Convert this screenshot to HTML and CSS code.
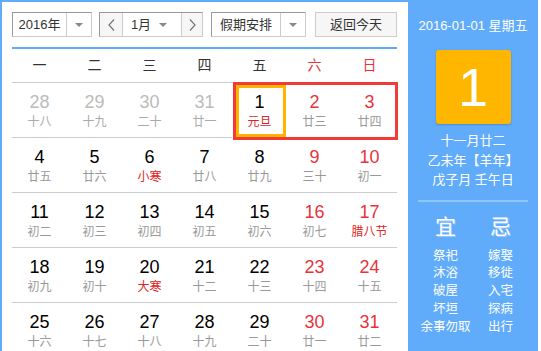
FILE: index.html
```html
<!DOCTYPE html>
<html>
<head>
<title>万年历</title>
<link rel="stylesheet" href="styles.css">
</head>
<body>

<div class='calendar'>

    <div class='main'>
        <div class='toolbar'>
            <div class='select year'>
                <div class='label'>2016年</div>
                <div class='arrow'><span class='tri'></span></div>
            </div>
            <div class='select month'>
                <div class='step prev'>
                    <svg width='7' height='12' viewBox='0 0 7 12'><polyline points='6,0.5 1,6 6,11.5' fill='none' stroke='#777' stroke-width='1.2'/></svg>
                </div>
                <div class='label'>1月</div>
                <div class='arrow plain'><span class='tri'></span></div>
                <div class='step next'>
                    <svg width='7' height='12' viewBox='0 0 7 12'><polyline points='1,0.5 6,6 1,11.5' fill='none' stroke='#777' stroke-width='1.2'/></svg>
                </div>
            </div>
            <div class='select holiday'>
                <div class='label'>假期安排</div>
                <div class='arrow'><span class='tri'></span></div>
            </div>
            <div class='today-btn'>返回今天</div>
        </div>

        <div class='days'>
            <div class='wk'>一</div>
            <div class='wk'>二</div>
            <div class='wk'>三</div>
            <div class='wk'>四</div>
            <div class='wk'>五</div>
            <div class='wk red'>六</div>
            <div class='wk red'>日</div>

            <div class='day other'><b>28</b><i>十八</i></div>
            <div class='day other'><b>29</b><i>十九</i></div>
            <div class='day other'><b>30</b><i>二十</i></div>
            <div class='day other'><b>31</b><i>廿一</i></div>
            <div class='day current'>
                <b>1</b><i class='fest'>元旦</i>
                <!-- holiday range and selected day frames -->
                <div class='range'></div>
                <div class='selected'></div>
            </div>
            <div class='day weekend'><b>2</b><i>廿三</i></div>
            <div class='day weekend'><b>3</b><i>廿四</i></div>

            <div class='day'><b>4</b><i>廿五</i></div>
            <div class='day'><b>5</b><i>廿六</i></div>
            <div class='day'><b>6</b><i class='fest'>小寒</i></div>
            <div class='day'><b>7</b><i>廿八</i></div>
            <div class='day'><b>8</b><i>廿九</i></div>
            <div class='day weekend'><b>9</b><i>三十</i></div>
            <div class='day weekend'><b>10</b><i>初一</i></div>

            <div class='day'><b>11</b><i>初二</i></div>
            <div class='day'><b>12</b><i>初三</i></div>
            <div class='day'><b>13</b><i>初四</i></div>
            <div class='day'><b>14</b><i>初五</i></div>
            <div class='day'><b>15</b><i>初六</i></div>
            <div class='day weekend'><b>16</b><i>初七</i></div>
            <div class='day weekend'><b>17</b><i class='fest'>腊八节</i></div>

            <div class='day'><b>18</b><i>初九</i></div>
            <div class='day'><b>19</b><i>初十</i></div>
            <div class='day'><b>20</b><i class='fest'>大寒</i></div>
            <div class='day'><b>21</b><i>十二</i></div>
            <div class='day'><b>22</b><i>十三</i></div>
            <div class='day weekend'><b>23</b><i>十四</i></div>
            <div class='day weekend'><b>24</b><i>十五</i></div>

            <div class='day'><b>25</b><i>十六</i></div>
            <div class='day'><b>26</b><i>十七</i></div>
            <div class='day'><b>27</b><i>十八</i></div>
            <div class='day'><b>28</b><i>十九</i></div>
            <div class='day'><b>29</b><i>二十</i></div>
            <div class='day weekend'><b>30</b><i>廿一</i></div>
            <div class='day weekend'><b>31</b><i>廿二</i></div>
        </div>
    </div>

    <div class='side'>
        <div class='side-date'>2016-01-01 星期五</div>
        <div class='side-day'>1</div>
        <div class='side-lunar'>
            <div>十一月廿二</div>
            <div>乙未年【羊年】</div>
            <div>戊子月 壬午日</div>
        </div>
        <div class='side-sep'></div>
        <div class='side-yiji'>
            <div class='col'>
                <div class='big'>宜</div>
                <div>祭祀</div>
                <div>沐浴</div>
                <div>破屋</div>
                <div>坏垣</div>
                <div>余事勿取</div>
            </div>
            <div class='col'>
                <div class='big'>忌</div>
                <div>嫁娶</div>
                <div>移徙</div>
                <div>入宅</div>
                <div>探病</div>
                <div>出行</div>
            </div>
        </div>
    </div>

</div>

</body>
</html>
```

FILE: styles.css
```css
html, body {
    margin: 0px;
    height: 100%;
    overflow: hidden;
    background: #fff;
}

body {
    font-family: "Liberation Sans", "Noto Sans CJK SC", sans-serif;
}

.calendar {
    display: flex;
    width: 538px;
    height: 351px;
    box-sizing: border-box;
    border-top: 2px solid #60acfa;
    border-left: 2px solid #60acfa;
}

/* left part: toolbar + month grid */
.main {
    width: 406px;
    box-sizing: border-box;
    padding: 10px 11px 0px 10px;
}

.toolbar {
    display: flex;
    height: 25px;
    padding-bottom: 10px;
    border-bottom: 2px solid #60acfa;
}

.select {
    display: flex;
    box-sizing: border-box;
    height: 25px;
    border: 1px solid;
    border-color: #999 #ccc #ccc #999;
    font-size: 13px;
    color: #333;
}

.select .label {
    flex: 1;
    line-height: 23px;
    text-align: center;
}

.select .arrow {
    width: 24px;
    border-left: 1px solid #ccc;
    display: flex;
    align-items: center;
    justify-content: center;
}

.select .arrow.plain {
    flex: 0 0 22px;
    border-left: none;
    justify-content: flex-start;
}

.tri {
    width: 0px;
    height: 0px;
    border-style: solid;
    border-width: 4px 4px 0px 4px;
    border-color: #888 transparent transparent transparent;
}

.year {
    width: 80px;
    margin-right: 7px;
}

.month {
    width: 104px;
    margin-right: 8px;
}

.month .label {
    flex: 0 0 36px;
}

.step {
    width: 22px;
    background: #f6f6f6;
    display: flex;
    align-items: center;
    justify-content: center;
}

.step.prev {
    border-right: 1px solid #ccc;
}

.step.next {
    border-left: 1px solid #ccc;
    flex: 1;
}

.holiday {
    width: 95px;
    margin-right: 9px;
}

.today-btn {
    width: 82px;
    height: 25px;
    box-sizing: border-box;
    border: 1px solid #ccc;
    background: #f6f6f6;
    font-size: 13px;
    line-height: 23px;
    text-align: center;
    color: #333;
}

/* month grid */
.days {
    display: grid;
    grid-template-columns: repeat(7, 55px);
    grid-template-rows: 34px repeat(5, 55px);
}

.wk {
    border-bottom: 1px solid #ccc;
    font-size: 14px;
    line-height: 33px;
    text-align: center;
    color: #333;
}

.wk.red {
    color: #e8333b;
}

.day {
    border-bottom: 1px solid #ccc;
    text-align: center;
    padding-top: 9px;
    box-sizing: border-box;
}

.day b {
    display: block;
    font-weight: normal;
    font-size: 18px;
    line-height: 20px;
    color: #000;
}

.day i {
    display: block;
    font-style: normal;
    font-size: 12px;
    line-height: 20px;
    color: #999;
}

.day.other b {
    color: #bbb;
}

.day.other i {
    color: #aaa;
}

.day.weekend b {
    color: #e8333b;
}

.day i.fest {
    color: #e02424;
}

.day.current {
    position: relative;
    border-bottom-color: transparent;
}

.range {
    position: absolute;
    top: -1px;
    left: 1px;
    width: 165px;
    height: 58px;
    box-sizing: border-box;
    border: 3px solid #f33a3a;
    pointer-events: none;
}

.selected {
    position: absolute;
    top: 2px;
    left: 4px;
    width: 50px;
    height: 52px;
    box-sizing: border-box;
    border: 3px solid #ffb400;
    pointer-events: none;
}

/* right part: today detail */
.side {
    width: 130px;
    background: #60acfa;
    color: #fff;
    text-align: center;
    display: flex;
    flex-direction: column;
    align-items: center;
}

.side-date {
    margin-top: 15px;
    font-size: 13px;
    line-height: 18px;
}

.side-day {
    margin-top: 15px;
    width: 75px;
    height: 74px;
    background: #ffb600;
    border-radius: 3px;
    box-shadow: 0px 1px 2px rgba(0, 40, 100, 0.25);
    font-size: 54px;
    line-height: 74px;
}

.side-lunar {
    margin-top: 7px;
    font-size: 13px;
    line-height: 19.5px;
}

.side-sep {
    margin-top: 10px;
    width: 110px;
    height: 2px;
    background: rgba(255, 255, 255, 0.3);
}

.side-yiji {
    display: flex;
    margin-top: 12px;
    font-size: 12.5px;
    line-height: 17.75px;
}

.side-yiji .col {
    width: 55px;
}

.side-yiji .big {
    font-size: 21px;
    line-height: 26px;
    margin-bottom: 8px;
    text-shadow: 1px 1px 0px rgba(255, 255, 255, 0.35);
}
```
